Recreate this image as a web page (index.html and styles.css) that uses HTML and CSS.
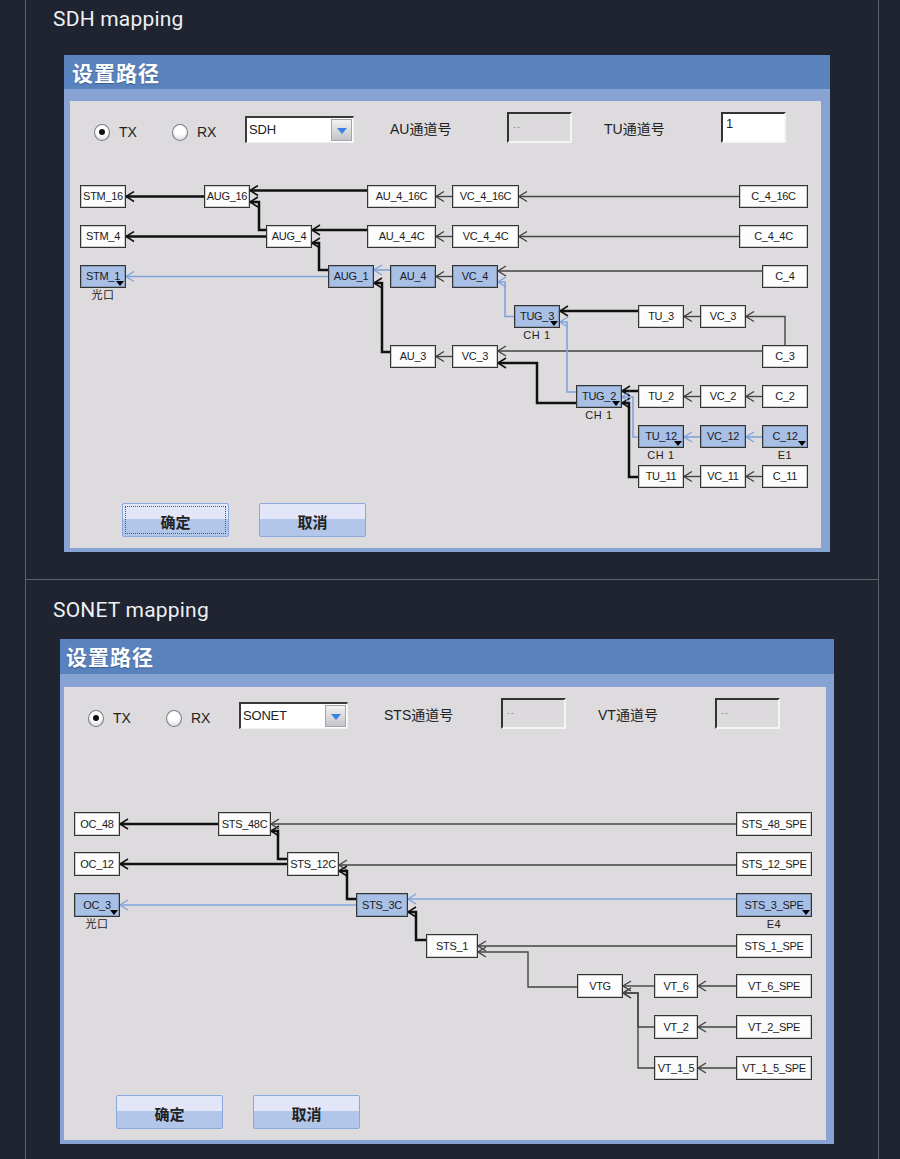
FILE: index.html
```html
<!DOCTYPE html>
<html lang="zh-CN">
<head>
<meta charset="UTF-8">
<meta name="viewport" content="width=device-width, initial-scale=1.0">
<title>SDH / SONET mapping</title>
<link rel="stylesheet" href="styles.css">
</head>
<body>

<div class="page">

  <!-- SDH -->
  <section class="block block-sdh">
    <h2 class="block-title">SDH mapping</h2>
    <div class="dialog dialog-sdh">
      <div class="dialog-title">设置路径</div>
      <div class="dialog-frame">
        <div class="panel">
          <div class="controls">
            <div class="opt"><span class="radio checked"></span>TX</div>
            <div class="opt"><span class="radio"></span>RX</div>
            <div class="combo"><span class="combo-text">SDH</span><span class="combo-btn"></span></div>
            <span class="field-label">AU通道号</span>
            <div class="input disabled">--</div>
            <span class="field-label">TU通道号</span>
            <div class="input">1</div>
          </div>

          <div class="canvas">
            <svg class="wires" width="751" height="360">
              <defs>
                <marker id="ah-thick" viewBox="0 0 10 12" refX="9" refY="6" markerWidth="10" markerHeight="12" markerUnits="userSpaceOnUse" orient="auto">
                  <path d="M1,1 L9,6 L1,11" fill="none" stroke="#111" stroke-width="1.5"/>
                </marker>
                <marker id="ah-thin" viewBox="0 0 10 12" refX="9" refY="6" markerWidth="10" markerHeight="12" markerUnits="userSpaceOnUse" orient="auto">
                  <path d="M1,1 L9,6 L1,11" fill="none" stroke="#444" stroke-width="1.3"/>
                </marker>
                <marker id="ah-blue" viewBox="0 0 10 12" refX="9" refY="6" markerWidth="10" markerHeight="12" markerUnits="userSpaceOnUse" orient="auto">
                  <path d="M1,1 L9,6 L1,11" fill="none" stroke="#7fa4dc" stroke-width="1.3"/>
                </marker>
              </defs>
              <polyline class="w-thick" points="134,53.5 56,53.5"/>
              <polyline class="w-thick" points="297,47.5 180,47.5"/>
              <polyline class="w-thick" points="196,93.5 56,93.5"/>
              <polyline class="w-thick" points="196,87 189,87 189,59 180,59"/>
              <polyline class="w-thick" points="297,87 242,87"/>
              <polyline class="w-thick" points="258,127 249,127 249,100 242,100"/>
              <polyline class="w-thick" points="568,168 490,168"/>
              <polyline class="w-thick" points="320,209 312,209 312,140 304,140"/>
              <polyline class="w-thick" points="506,260 467,260 467,220 428,220"/>
              <polyline class="w-thick" points="568,248 552,248"/>
              <polyline class="w-thick" points="568,334 559,334 559,260 552,260"/>

              <polyline class="w-thin" points="382,53.5 366,53.5"/>
              <polyline class="w-thin" points="669,53.5 449,53.5"/>
              <polyline class="w-thin" points="382,93.5 366,93.5"/>
              <polyline class="w-thin" points="669,93.5 449,93.5"/>
              <polyline class="w-thin" points="382,133.5 366,133.5"/>
              <polyline class="w-thin" points="692,128 428,128"/>
              <polyline class="w-thin" points="630,173.5 614,173.5"/>
              <polyline class="w-thin" points="715,202 715,173.5 676,173.5"/>
              <polyline class="w-thin" points="692,208 428,208"/>
              <polyline class="w-thin" points="382,213.5 366,213.5"/>
              <polyline class="w-thin" points="630,253.5 614,253.5"/>
              <polyline class="w-thin" points="692,253.5 676,253.5"/>
              <polyline class="w-thin" points="630,333.5 614,333.5"/>
              <polyline class="w-thin" points="692,333.5 676,333.5"/>

              <polyline class="w-blue" points="258,133.5 56,133.5"/>
              <polyline class="w-blue" points="320,127 304,127"/>
              <polyline class="w-blue" points="444,173.5 435,173.5 435,139 428,139"/>
              <polyline class="w-blue" points="506,249 497,249 497,179 490,179"/>
              <polyline class="w-blue" points="568,294 563,294 563,254 552,254"/>
              <polyline class="w-blue" points="630,294 614,294"/>
              <polyline class="w-blue" points="692,294 676,294"/>
            </svg>

            <div class="node" style="left:10px;top:42px">STM_16</div>
            <div class="node" style="left:134px;top:42px">AUG_16</div>
            <div class="node" style="left:297px;top:42px;width:69px">AU_4_16C</div>
            <div class="node" style="left:382px;top:42px;width:67px">VC_4_16C</div>
            <div class="node" style="left:669px;top:42px;width:69px">C_4_16C</div>

            <div class="node" style="left:10px;top:82px">STM_4</div>
            <div class="node" style="left:196px;top:82px">AUG_4</div>
            <div class="node" style="left:297px;top:82px;width:69px">AU_4_4C</div>
            <div class="node" style="left:382px;top:82px;width:67px">VC_4_4C</div>
            <div class="node" style="left:669px;top:82px;width:69px">C_4_4C</div>

            <div class="node sel drop" style="left:10px;top:122px">STM_1<span class="tag">光口</span></div>
            <div class="node sel" style="left:258px;top:122px">AUG_1</div>
            <div class="node sel" style="left:320px;top:122px">AU_4</div>
            <div class="node sel" style="left:382px;top:122px">VC_4</div>
            <div class="node" style="left:692px;top:122px">C_4</div>

            <div class="node sel drop" style="left:444px;top:162px">TUG_3<span class="tag">CH 1</span></div>
            <div class="node" style="left:568px;top:162px">TU_3</div>
            <div class="node" style="left:630px;top:162px">VC_3</div>

            <div class="node" style="left:320px;top:202px">AU_3</div>
            <div class="node" style="left:382px;top:202px">VC_3</div>
            <div class="node" style="left:692px;top:202px">C_3</div>

            <div class="node sel drop" style="left:506px;top:242px">TUG_2<span class="tag">CH 1</span></div>
            <div class="node" style="left:568px;top:242px">TU_2</div>
            <div class="node" style="left:630px;top:242px">VC_2</div>
            <div class="node" style="left:692px;top:242px">C_2</div>

            <div class="node sel drop" style="left:568px;top:282px">TU_12<span class="tag">CH 1</span></div>
            <div class="node sel" style="left:630px;top:282px">VC_12</div>
            <div class="node sel drop" style="left:692px;top:282px">C_12<span class="tag">E1</span></div>

            <div class="node" style="left:568px;top:322px">TU_11</div>
            <div class="node" style="left:630px;top:322px">VC_11</div>
            <div class="node" style="left:692px;top:322px">C_11</div>
          </div>

          <div class="actions">
            <button class="btn focused">确定</button>
            <button class="btn">取消</button>
          </div>
        </div>
      </div>
    </div>
  </section>

  <!-- SONET -->
  <section class="block block-sonet">
    <h2 class="block-title">SONET mapping</h2>
    <div class="dialog dialog-sonet">
      <div class="dialog-title">设置路径</div>
      <div class="dialog-frame">
        <div class="panel">
          <div class="controls">
            <div class="opt"><span class="radio checked"></span>TX</div>
            <div class="opt"><span class="radio"></span>RX</div>
            <div class="combo"><span class="combo-text">SONET</span><span class="combo-btn"></span></div>
            <span class="field-label">STS通道号</span>
            <div class="input disabled">--</div>
            <span class="field-label">VT通道号</span>
            <div class="input disabled">--</div>
          </div>

          <div class="canvas">
            <svg class="wires" width="762" height="366">
              <polyline class="w-thick" points="154,95 56,95"/>
              <polyline class="w-thick" points="223,130 214,130 214,102 207,102"/>
              <polyline class="w-thick" points="223,135 56,135"/>
              <polyline class="w-thick" points="292,170 283,170 283,142 275,142"/>
              <polyline class="w-thick" points="362,211 352,211 352,183 344,183"/>

              <polyline class="w-thin" points="672,95 207,95"/>
              <polyline class="w-thin" points="672,136 275,136"/>
              <polyline class="w-thin" points="672,217 414,217"/>
              <polyline class="w-thin" points="513,258 464,258 464,223 414,223"/>
              <polyline class="w-thin" points="590,257 559,257"/>
              <polyline class="w-thin" points="672,257 634,257"/>
              <polyline class="w-thin" points="590,298 574,298 574,264 559,264"/>
              <polyline class="w-thin" points="590,339 574,339 574,264 559,264"/>
              <polyline class="w-thin" points="672,298 634,298"/>
              <polyline class="w-thin" points="672,339 634,339"/>

              <polyline class="w-blue" points="292,176 56,176"/>
              <polyline class="w-blue" points="672,170 344,170"/>
            </svg>

            <div class="node" style="left:10px;top:83px">OC_48</div>
            <div class="node" style="left:154px;top:83px;width:53px">STS_48C</div>
            <div class="node" style="left:672px;top:83px;width:76px">STS_48_SPE</div>

            <div class="node" style="left:10px;top:123px">OC_12</div>
            <div class="node" style="left:223px;top:123px;width:52px">STS_12C</div>
            <div class="node" style="left:672px;top:123px;width:76px">STS_12_SPE</div>

            <div class="node sel drop" style="left:10px;top:164px">OC_3<span class="tag">光口</span></div>
            <div class="node sel" style="left:292px;top:164px;width:52px">STS_3C</div>
            <div class="node sel drop" style="left:672px;top:164px;width:76px">STS_3_SPE<span class="tag">E4</span></div>

            <div class="node" style="left:362px;top:205px;width:52px">STS_1</div>
            <div class="node" style="left:672px;top:205px;width:76px">STS_1_SPE</div>

            <div class="node" style="left:513px;top:245px">VTG</div>
            <div class="node" style="left:590px;top:245px;width:44px">VT_6</div>
            <div class="node" style="left:672px;top:245px;width:76px">VT_6_SPE</div>

            <div class="node" style="left:590px;top:286px;width:44px">VT_2</div>
            <div class="node" style="left:672px;top:286px;width:76px">VT_2_SPE</div>

            <div class="node" style="left:590px;top:327px;width:44px">VT_1_5</div>
            <div class="node" style="left:672px;top:327px;width:76px">VT_1_5_SPE</div>
          </div>

          <div class="actions">
            <button class="btn">确定</button>
            <button class="btn">取消</button>
          </div>
        </div>
      </div>
    </div>
  </section>

</div>

</body>
</html>
```

FILE: styles.css
```css
* {
  box-sizing: border-box;
  margin: 0;
  padding: 0;
}

html, body {
  height: 100%;
}

body {
  background: #1f2430;
  font-family: "Liberation Sans", "Noto Sans CJK SC", sans-serif;
  overflow: hidden;
}

.page {
  margin-left: 25px;
  width: 854px;
  min-height: 1159px;
  border-left: 1px solid #5b6069;
  border-right: 1px solid #5b6069;
}

.block {
  padding-left: 27px;
}

.block-sdh {
  padding-top: 7px;
  padding-bottom: 27px;
  border-bottom: 1px solid #5b6069;
}

.block-sonet {
  padding-top: 18px;
}

.block-title {
  font: 400 21px/24px Roboto, "Liberation Sans", sans-serif;
  color: #eef0f3;
  letter-spacing: 0.2px;
}

/* dialog window */
.dialog {
  background: #86a3d3;
}

.dialog-sdh {
  width: 766px;
  margin: 24px 0 0 11px;
}

.dialog-sonet {
  width: 774px;
  margin: 17px 0 0 7px;
}

.dialog-title {
  height: 34px;
  padding-left: 8px;
  background: #5a83bd;
  color: #fff;
  font: 700 21px/34px "Noto Sans CJK SC", sans-serif;
  letter-spacing: 1px;
  text-shadow: 0 1px 1px rgba(30, 50, 90, 0.5);
}

.dialog-sonet .dialog-title {
  height: 35px;
  line-height: 35px;
  padding-left: 6px;
}

.dialog-frame {
  padding: 12px 9px 4px 6px;
}

.dialog-sonet .dialog-frame {
  padding: 13px 8px 4px 4px;
}

.panel {
  background: #dddbde;
  padding: 11px 0 11px 0;
}

/* top controls */
.controls {
  display: grid;
  grid-template-columns: 78px 73px 145px 117px 97px 117px 65px;
  align-items: center;
  height: 31px;
  padding-left: 24px;
  font-size: 14px;
  color: #222;
}

.opt {
  display: flex;
  align-items: center;
  gap: 9px;
  margin-top: 9px;
}

.radio {
  position: relative;
  width: 16px;
  height: 17px;
  border-radius: 50%;
  border: 1px solid #7a7d84;
  background: radial-gradient(circle at 50% 35%, #fff 0 40%, #c9ced8 100%);
}

.radio.checked::after {
  content: "";
  position: absolute;
  left: 4px;
  top: 4.5px;
  width: 6px;
  height: 6px;
  border-radius: 50%;
  background: #111;
}

.combo {
  display: flex;
  width: 109px;
  height: 27px;
  margin-top: 4px;
  padding: 1px 1px 1px 0;
  background: #fff;
  border-top: 2px solid #3a3a3a;
  border-left: 2px solid #3a3a3a;
  border-right: 1px solid #f2f2f2;
  border-bottom: 1px solid #f2f2f2;
}

.combo-text {
  flex: 1;
  padding-left: 2px;
  font-size: 13px;
  line-height: 21px;
  letter-spacing: -0.2px;
}

.combo-btn {
  position: relative;
  width: 21px;
  border: 1px solid #a5a5a5;
  background: linear-gradient(#f2f2f2, #c2c4c8);
}

.combo-btn::after {
  content: "";
  position: absolute;
  left: 5px;
  top: 8px;
  border-left: 5px solid transparent;
  border-right: 5px solid transparent;
  border-top: 6px solid #3b80e4;
}

.field-label {
  white-space: nowrap;
}

.input {
  width: 65px;
  height: 31px;
  padding: 2px 3px;
  background: #fff;
  border-top: 2px solid #333;
  border-left: 2px solid #333;
  border-right: 2px solid #f4f4f4;
  border-bottom: 2px solid #f4f4f4;
  font-size: 13px;
  line-height: 16px;
}

.input.disabled {
  background: #dcdadd;
  color: #8a8a8a;
  font-size: 9px;
  padding: 5px 4px;
  letter-spacing: 1px;
}

/* diagram */
.canvas {
  position: relative;
  height: 360px;
}

.dialog-sonet .canvas {
  height: 366px;
}

.wires {
  position: absolute;
  left: 0;
  top: 0;
  overflow: visible;
}

.wires polyline {
  fill: none;
}

.w-thick {
  stroke: #111;
  stroke-width: 2.5;
  marker-end: url(#ah-thick);
}

.w-thin {
  stroke: #454545;
  stroke-width: 1.4;
  marker-end: url(#ah-thin);
}

.w-blue {
  stroke: #7fa4dc;
  stroke-width: 1.6;
  marker-end: url(#ah-blue);
}

.node {
  position: absolute;
  width: 46px;
  height: 23px;
  border: 1px solid #333;
  box-shadow: inset 0 0 0 1px rgba(0, 0, 0, 0.18);
  background: #fcfcfc;
  font-size: 11px;
  line-height: 21px;
  letter-spacing: -0.3px;
  text-align: center;
  white-space: nowrap;
  color: #1b1b1b;
}

.dialog-sonet .node {
  height: 24px;
  line-height: 22px;
}

.node.sel {
  background: #a9c0e6;
}

.node.drop::after {
  content: "";
  position: absolute;
  right: 1px;
  bottom: 1px;
  border-left: 4px solid transparent;
  border-right: 4px solid transparent;
  border-top: 5px solid #000;
}

.tag {
  position: absolute;
  top: 100%;
  left: -10px;
  right: -10px;
  margin-top: 2px;
  font-size: 11px;
  line-height: 12px;
  letter-spacing: 0.6px;
  color: #222;
}

/* buttons */
.actions {
  display: flex;
  gap: 30px;
  padding-left: 52px;
}

.btn {
  width: 107px;
  height: 34px;
  padding-top: 2px;
  border: 1px solid #8aa8d9;
  border-radius: 2px;
  background: linear-gradient(#e3e6f8 0 48%, #b2c6ea 48%);
  font: 700 15px "Noto Sans CJK SC", sans-serif;
  color: #222;
}

.btn.focused {
  outline: 1px dotted #555;
  outline-offset: -4px;
}
```
